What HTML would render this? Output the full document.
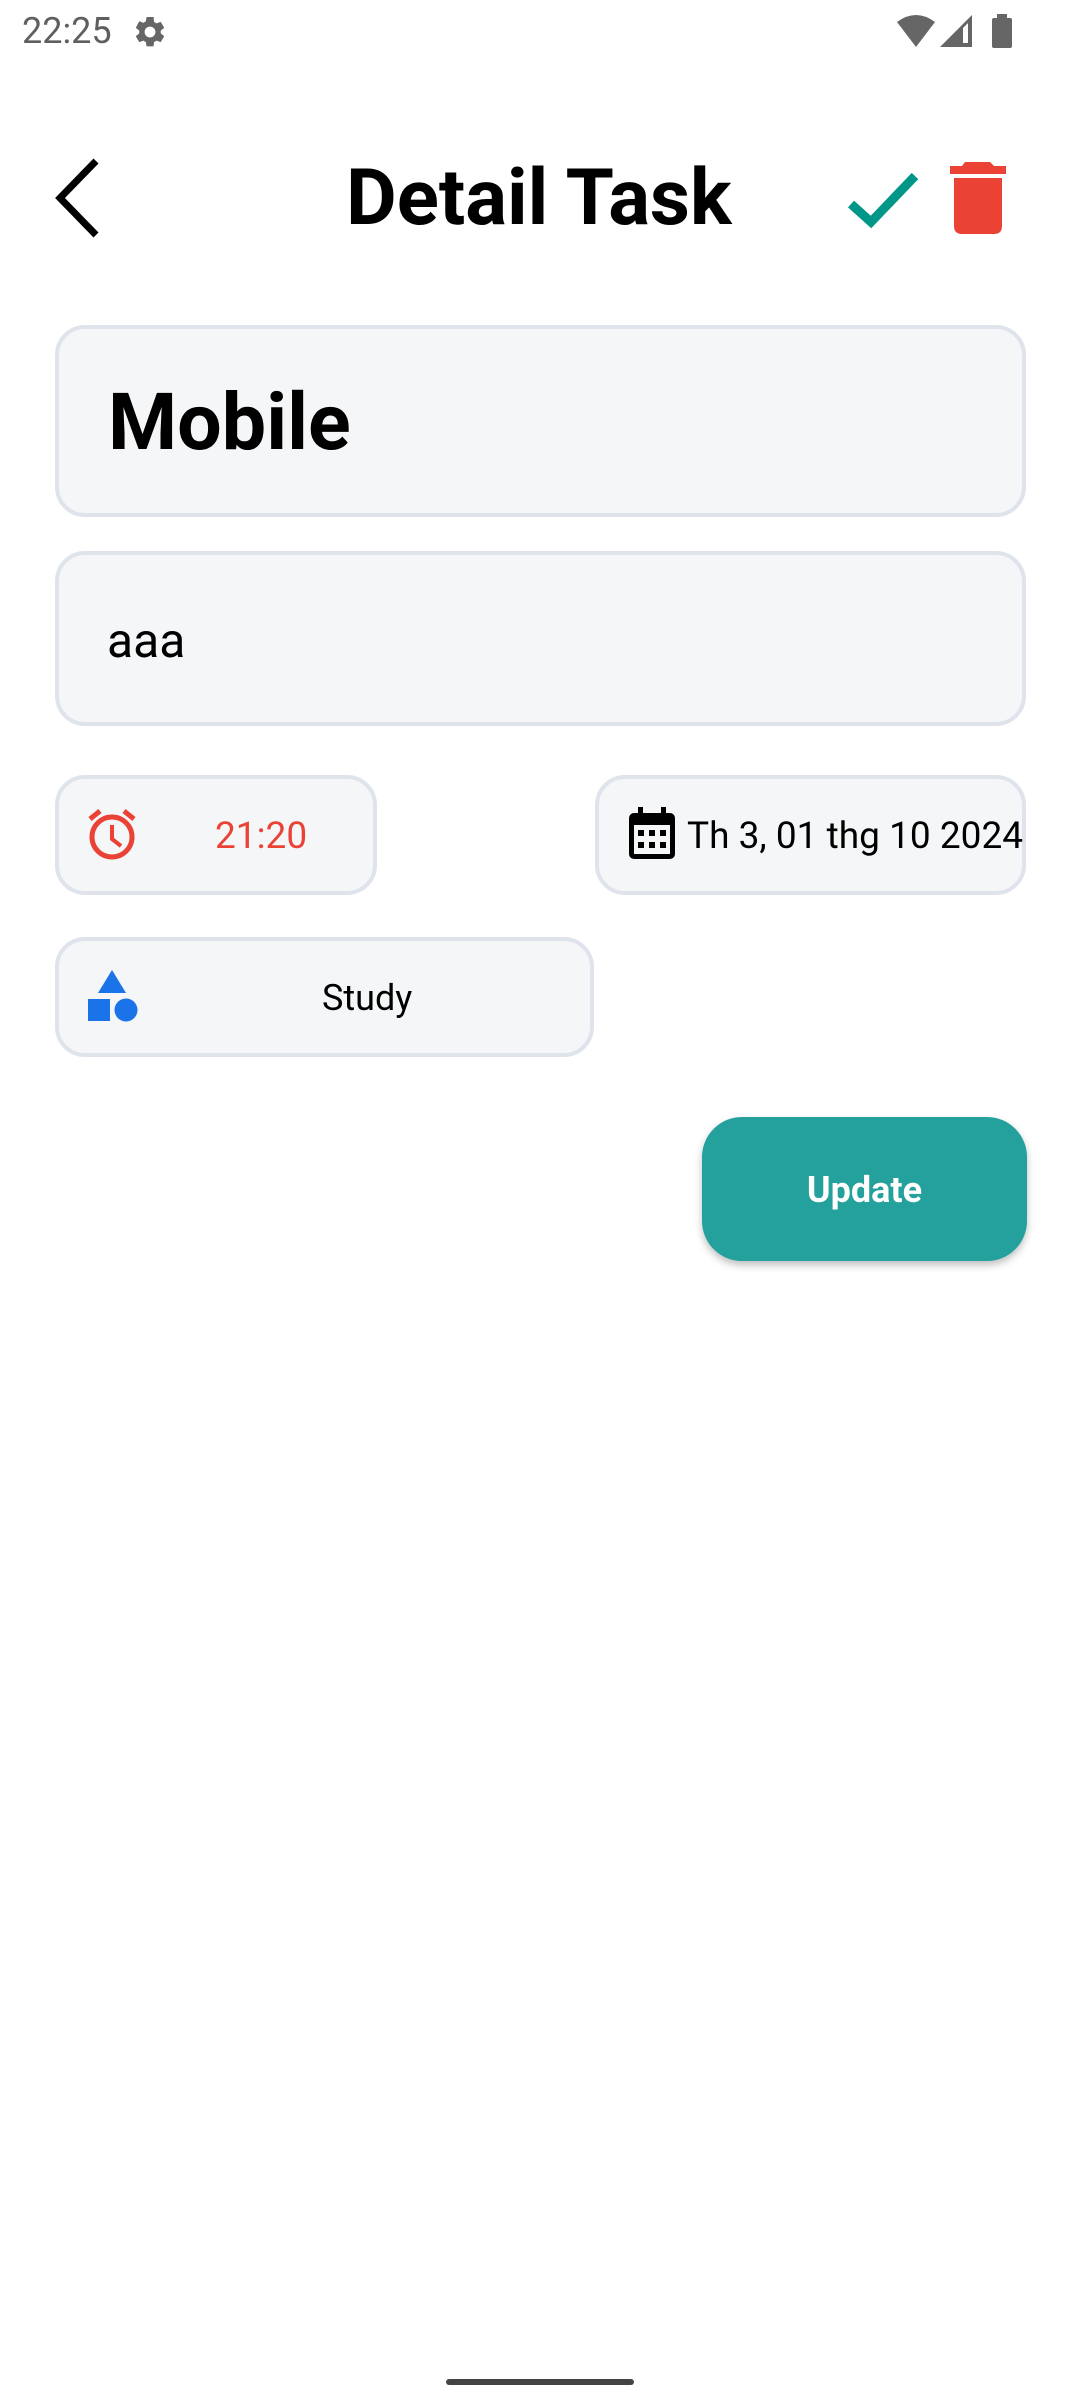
<!DOCTYPE html>
<html><head><meta charset="utf-8"><style>
*{margin:0;padding:0;box-sizing:border-box}
body{width:1080px;height:2400px;background:#fff;position:relative;overflow:hidden;font-family:"Roboto","Liberation Sans",sans-serif}
.a{position:absolute}
.box{position:absolute;background:#f4f6f8;border:4px solid #dfe3ec;border-radius:30px}
.t{position:absolute;white-space:nowrap;line-height:1}
</style></head><body>
<div class="t" style="left:22px;top:13px;font-size:36px;color:#5f5f5f">22:25</div>
<svg class="a" style="left:132px;top:14px" width="36" height="36" viewBox="0 0 24 24"><path fill="#666" d="M19.14 12.94c.04-.3.06-.61.06-.94s-.02-.64-.07-.94l2.030-1.58a.49.49 0 0 0 .12-.61l-1.92-3.32a.49.49 0 0 0-.59-.22l-2.39.96c-.5-.38-1.030-.7-1.62-.94l-.36-2.54A.48.48 0 0 0 13.92 2h-3.84c-.24 0-.43.17-.47.41l-.36 2.54c-.59.24-1.13.57-1.62.94l-2.39-.96a.48.48 0 0 0-.59.22L2.74 8.87a.47.47 0 0 0 .12.61l2.03 1.58c-.05.3-.09.63-.09.94s.02.64.07.94l-2.03 1.58a.49.49 0 0 0-.12.61l1.92 3.32c.12.22.37.29.59.22l2.39-.96c.5.38 1.03.7 1.62.94l.36 2.54c.05.24.24.41.48.41h3.84c.24 0 .44-.17.47-.41l.36-2.54c.59-.24 1.13-.56 1.62-.94l2.39.96c.22.08.47 0 .59-.22l1.92-3.32a.47.47 0 0 0-.12-.61l-2.01-1.58zM12 15.6A3.6 3.6 0 1 1 12 8.4a3.6 3.6 0 0 1 0 7.2z"/></svg>
<svg class="a" style="left:895px;top:14px" width="42" height="34" viewBox="0 0 42 34"><path fill="#666" d="M2 8 Q21 -6 40 8 L21 33 Z"/></svg>
<svg class="a" style="left:939px;top:14px" width="34" height="34" viewBox="0 0 34 34"><path fill="#666" d="M33 1 V33 H1 Z"/><path fill="#fff" d="M24 14 V29 H29 V9 Z"/></svg>
<div class="a" style="left:992px;top:18px;width:20px;height:30px;background:#666;border-radius:2px"></div>
<div class="a" style="left:997px;top:14px;width:10px;height:5px;background:#666"></div>

<svg class="a" style="left:50px;top:158px" width="56" height="80" viewBox="0 0 56 80"><path d="M46 3 L10 40 L46 77" fill="none" stroke="#000" stroke-width="7"/></svg>
<div class="t" style="left:346px;top:160px;font-size:78px;font-weight:bold;color:#000">Detail Task</div>
<svg class="a" style="left:840px;top:160px" width="90" height="75"><path d="M11 44 L31 62 L75 16" fill="none" stroke="#009688" stroke-width="9"/></svg>
<svg class="a" style="left:948px;top:160px" width="62" height="76"><path fill="#ea4335" d="M17 2 H42 L46 6 H58 V14 H2 V6 H14 Z M6 18 H54 V66 Q54 74 46 74 H14 Q6 74 6 66 Z"/></svg>

<div class="box" style="left:55px;top:325px;width:971px;height:192px"></div>
<div class="t" style="left:108px;top:384px;font-size:79px;font-weight:bold;color:#000">Mobile</div>
<div class="box" style="left:55px;top:551px;width:971px;height:175px"></div>
<div class="t" style="left:107px;top:617px;font-size:48px;color:#000">aaa</div>

<div class="box" style="left:55px;top:775px;width:322px;height:120px"></div>
<svg class="a" style="left:84px;top:806px" width="56" height="56" viewBox="0 0 56 56"><circle cx="28" cy="31" r="20" fill="none" stroke="#ea4335" stroke-width="5"/><path d="M28 19 V33 L37 40" fill="none" stroke="#ea4335" stroke-width="4"/><path d="M6 13 L16 5 M50 13 L40 5" stroke="#ea4335" stroke-width="5"/></svg>
<div class="t" style="left:215px;top:818px;font-size:37px;color:#ea4335">21:20</div>

<div class="box" style="left:595px;top:775px;width:431px;height:120px"></div>
<svg class="a" style="left:628px;top:806px" width="48" height="54" viewBox="0 0 48 54"><rect x="1" y="7" width="46" height="46" rx="5" fill="#000"/><rect x="10" y="1" width="5" height="10" fill="#000"/><rect x="33" y="1" width="5" height="10" fill="#000"/><rect x="6" y="19" width="36" height="29" fill="#f4f6f8"/><g fill="#000"><rect x="10" y="24" width="6" height="6"/><rect x="21" y="24" width="6" height="6"/><rect x="32" y="24" width="6" height="6"/><rect x="10" y="36" width="6" height="6"/><rect x="21" y="36" width="6" height="6"/><rect x="32" y="36" width="6" height="6"/></g></svg>
<div class="t" style="left:687px;top:818px;font-size:37px;color:#000">Th 3, 01 thg 10 2024</div>

<div class="box" style="left:55px;top:937px;width:539px;height:120px"></div>
<svg class="a" style="left:86px;top:968px" width="56" height="58"><path d="M26 2 L40 25 H12 Z" fill="#1a73e8"/><rect x="2" y="31" width="22" height="22" fill="#1a73e8"/><circle cx="40" cy="42" r="11.5" fill="#1a73e8"/></svg>
<div class="t" style="left:322px;top:980px;font-size:36px;color:#000">Study</div>

<div class="a" style="left:702px;top:1117px;width:325px;height:144px;background:#24a19c;border-radius:40px;box-shadow:0 4px 8px rgba(0,0,0,0.25)"></div>
<div class="t" style="left:702px;top:1172px;width:325px;text-align:center;font-size:36px;font-weight:bold;color:#fff">Update</div>

<div class="a" style="left:446px;top:2379px;width:188px;height:6px;background:#444;border-radius:3px"></div>
</body></html>
